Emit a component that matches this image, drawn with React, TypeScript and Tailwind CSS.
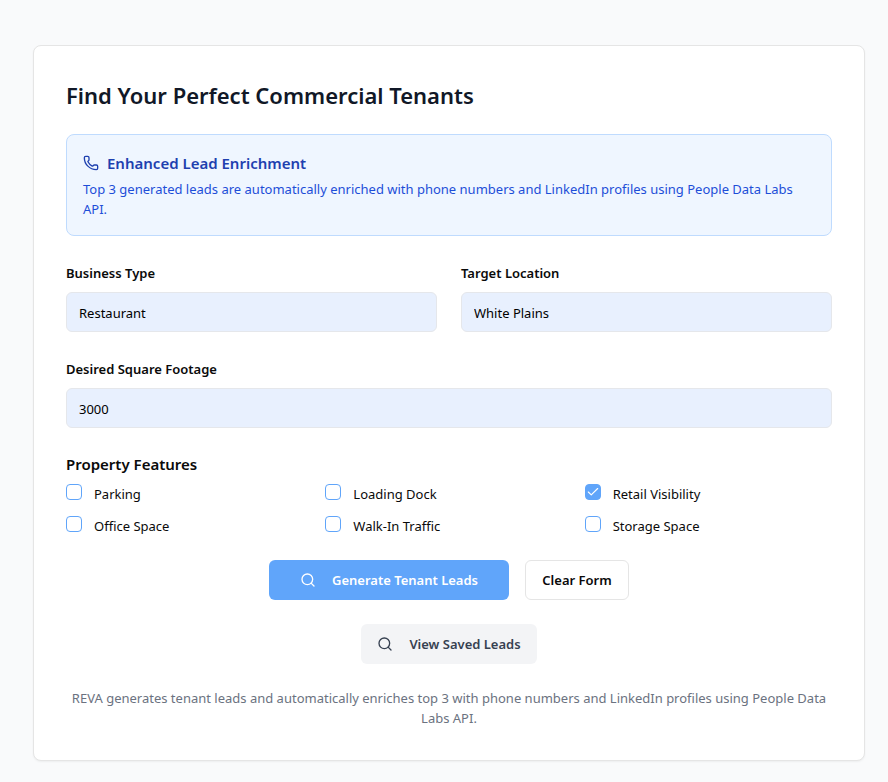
import React from "react";
import { Check, Phone, Search } from "lucide-react";

const features = [
  { name: "Parking", checked: false },
  { name: "Loading Dock", checked: false },
  { name: "Retail Visibility", checked: true },
  { name: "Office Space", checked: false },
  { name: "Walk-In Traffic", checked: false },
  { name: "Storage Space", checked: false },
];

function Field({ id, label, value }: { id: string; label: string; value: string }) {
  return (
    <div className="flex min-w-0 flex-1 flex-col gap-2.5">
      <label htmlFor={id} className="text-[13px] font-semibold leading-[18px]">
        {label}
      </label>
      <input
        id={id}
        type="text"
        defaultValue={value}
        className="h-10 w-full rounded-md border border-[#e5e7eb] bg-[#e8f0fe] px-3 pt-0.5 text-[13px] text-black outline-none"
      />
    </div>
  );
}

function Feature({ name, checked }: { name: string; checked: boolean }) {
  return (
    <label className="flex items-start gap-3 text-[13px] leading-5">
      <span className="grid h-4 w-4 shrink-0">
        <input
          type="checkbox"
          defaultChecked={checked}
          className="peer col-start-1 row-start-1 h-4 w-4 appearance-none rounded-sm border border-[#60a5fa] bg-white checked:bg-[#60a5fa]"
        />
        <Check
          strokeWidth={2}
          className="pointer-events-none invisible col-start-1 row-start-1 h-4 w-4 p-px text-white peer-checked:visible"
        />
      </span>
      {name}
    </label>
  );
}

export default function App() {
  return (
    <div className="min-h-screen bg-[#f9fafb] pt-[45px] pr-[23px] pb-[21px] pl-[33px] font-['Noto_Sans','Open_Sans',sans-serif] text-[#0a0a0a]">
      <main className="rounded-lg border border-[#e5e5e5] bg-white p-8 shadow-xs">
        <h1 className="mb-[22px] text-[22px] font-semibold leading-[34px] text-[#111827]">
          Find Your Perfect Commercial Tenants
        </h1>

        <section className="mb-7 rounded-lg border border-[#bfdbfe] bg-[#eff6ff] p-4">
          <div className="flex items-center gap-2 text-[#1e40af]">
            <Phone className="h-4 w-4" />
            <h2 className="text-[15px] font-semibold leading-6">Enhanced Lead Enrichment</h2>
          </div>
          <p className="mt-1 text-[13px] leading-5 text-[#1d4ed8]">
            Top 3 generated leads are automatically enriched with phone numbers and LinkedIn profiles using People Data Labs API.
          </p>
        </section>

        <form onSubmit={(event) => event.preventDefault()}>
          <div className="mb-7 flex gap-6">
            <Field id="business" label="Business Type" value="Restaurant" />
            <Field id="location" label="Target Location" value="White Plains" />
          </div>
          <Field id="footage" label="Desired Square Footage" value="3000" />

          <fieldset className="mt-6">
            <legend className="mb-2 text-[15px] font-semibold leading-6">Property Features</legend>
            <div className="grid grid-cols-3 gap-3">
              {features.map((feature) => (
                <Feature key={feature.name} {...feature} />
              ))}
            </div>
          </fieldset>

          <div className="mt-6 flex justify-center gap-4 text-[13px] font-semibold">
            <button type="submit" className="flex h-10 w-60 items-center justify-center gap-4 rounded-md bg-[#60a5fa] text-white">
              <Search className="h-4 w-4" />
              <span className="pt-0.5">Generate Tenant Leads</span>
            </button>
            <button type="reset" className="h-10 w-[104px] rounded-md border border-[#e5e5e5] bg-white pt-0.5">
              Clear Form
            </button>
          </div>
        </form>

        <div className="mt-6 flex justify-center">
          <button type="button" className="flex h-10 w-44 items-center justify-center gap-4 rounded-md bg-[#f3f4f6] text-[13px] font-semibold text-[#374151]">
            <Search className="h-4 w-4" />
            <span className="pt-0.5">View Saved Leads</span>
          </button>
        </div>

        <p className="mt-6 text-center text-[13px] leading-5 text-[#6b7280]">
          REVA generates tenant leads and automatically enriches top 3 with phone numbers and LinkedIn profiles using People Data Labs API.
        </p>
      </main>
    </div>
  );
}
